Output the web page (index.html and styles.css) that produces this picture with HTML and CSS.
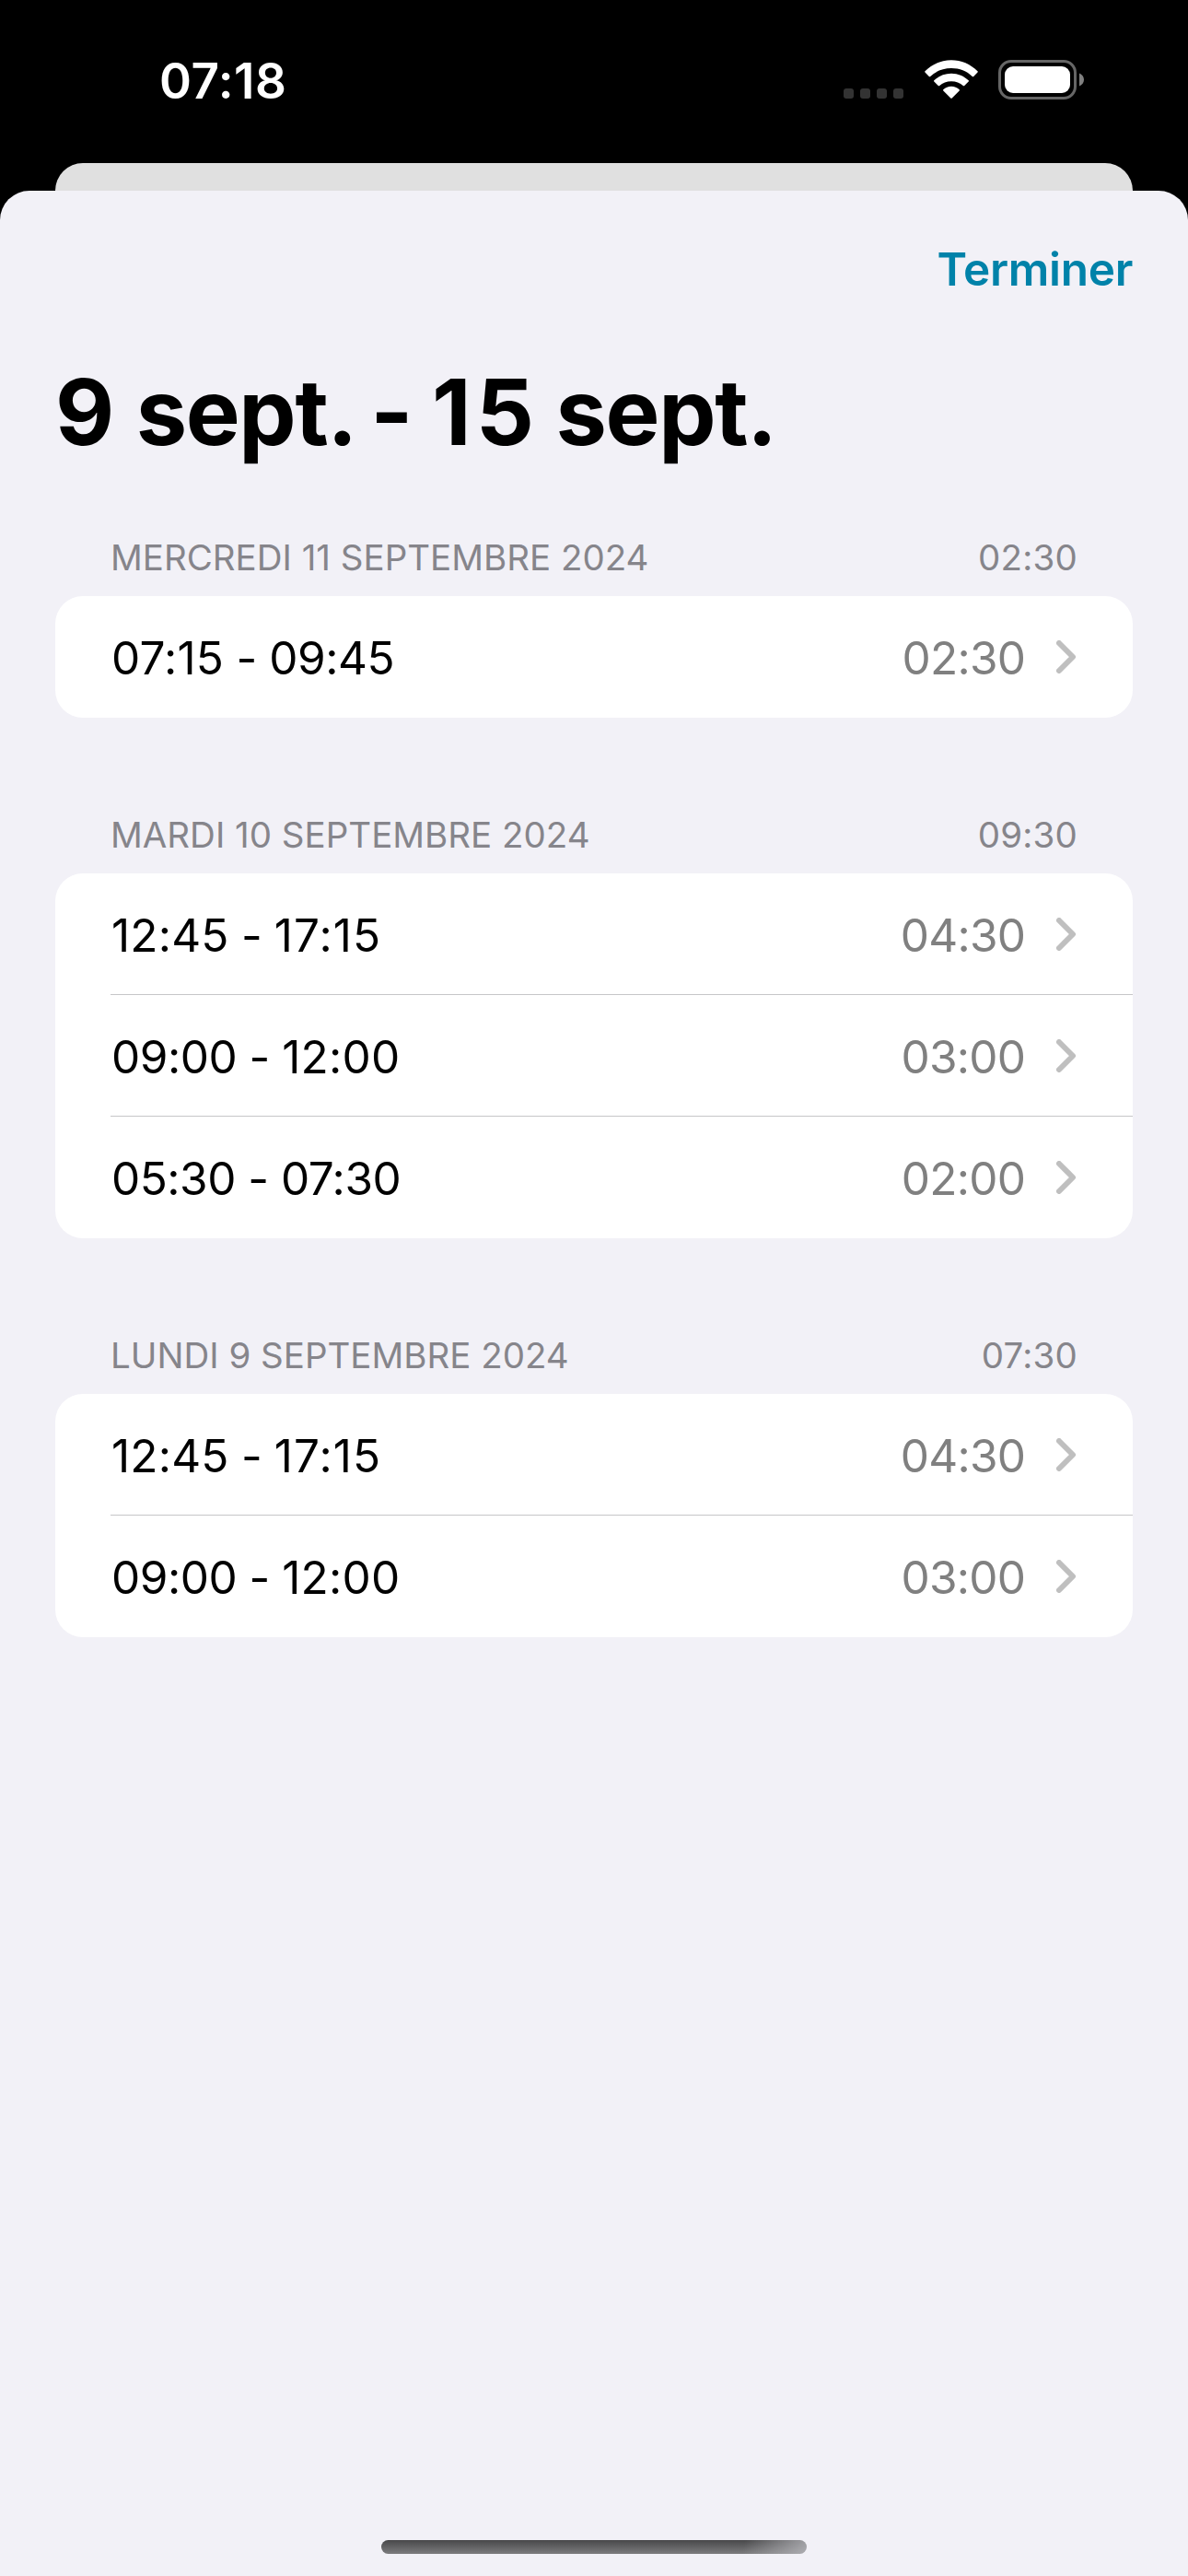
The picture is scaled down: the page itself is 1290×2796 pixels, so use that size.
FILE: index.html
```html
<!DOCTYPE html>
<html lang="fr">
<head>
<meta charset="utf-8">
<title>9 sept. - 15 sept.</title>
<link rel="stylesheet" href="styles.css">
</head>
<body>
<div class="screen">
  <header class="status-bar">
    <span class="clock">07:18</span>
    <div class="indicators">
      <svg class="cellular" width="65" height="11" viewBox="0 0 65 11" fill="#333"><rect width="11" height="11" rx="3"/><rect x="18" width="11" height="11" rx="3"/><rect x="36" width="11" height="11" rx="3"/><rect x="54" width="11" height="11" rx="3"/></svg>
      <svg class="wifi" width="58" height="43" viewBox="0 0 58 43" fill="#fff"><path d="M.5 12.200C8.200 4.500 18.200.2 29 .2s20.800 4.300 28.500 12q.6.7 0 1.400l-4.300 4.300q-.7.6-1.400 0C45.800 12.200 38 9 29 9S12.200 12.200 6.200 17.900q-.7.6-1.400 0L.5 13.600q-.6-.7 0-1.400z"/><path d="M10.300 22.300C15.200 17.500 21.800 14.700 29 14.700s13.800 2.800 18.700 7.600q.6.6 0 1.300l-4.500 4.400q-.7.6-1.400 0C38.400 25 34 23.300 29 23.300S19.600 25 16.200 28q-.7.6-1.400 0l-4.500-4.400q-.6-.7 0-1.300z"/><path d="M20.300 32.200c2.400-2.200 5.300-3.400 8.700-3.400s6.300 1.200 8.700 3.400q.6.6 0 1.300l-8 8q-.7.6-1.400 0l-8-8q-.6-.7 0-1.300z"/></svg>
      <svg class="battery" width="93" height="43" viewBox="0 0 93 43"><rect x="1.500" y="1.500" width="82" height="40" rx="12.500" fill="none" stroke="#666" stroke-width="3"/><rect x="7" y="7" width="71" height="29" rx="9" fill="#fff"/><path d="M88 14.500c3 1.300 5 3.800 5 7s-2 5.700-5 7z" fill="#808080"/></svg>
    </div>
  </header>
  <div class="previous-sheet"></div>
  <main class="sheet">
    <nav class="toolbar"><a class="done">Terminer</a></nav>
    <h1 class="title"><span>9 </span><span class="month">sept.</span><span class="dash"> - </span><span class="teen">15</span> <span class="month">sept.</span></h1>

    <section class="day">
      <div class="day-header"><h2 class="day-name">MERCREDI 11 SEPTEMBRE 2024</h2><span class="day-total">02:30</span></div>
      <ul class="card">
        <li class="entry"><span class="range"><span class="one">07:15</span><span class="dash"> - </span><span>09:45</span></span><span class="duration">02:30</span><svg class="chevron" width="22" height="36" viewBox="0 0 22 36"><path d="M3 3l15 15L3 33"/></svg></li>
      </ul>
    </section>

    <section class="day">
      <div class="day-header"><h2 class="day-name">MARDI 10 SEPTEMBRE 2024</h2><span class="day-total">09:30</span></div>
      <ul class="card">
        <li class="entry"><span class="range"><span class="one">12:45</span><span class="dash"> - </span><span class="ones">17:15</span></span><span class="duration">04:30</span><svg class="chevron" width="22" height="36" viewBox="0 0 22 36"><path d="M3 3l15 15L3 33"/></svg></li>
        <li class="entry"><span class="range"><span>09:00</span><span class="dash"> - </span><span class="one">12:00</span></span><span class="duration">03:00</span><svg class="chevron" width="22" height="36" viewBox="0 0 22 36"><path d="M3 3l15 15L3 33"/></svg></li>
        <li class="entry"><span class="range"><span>05:30</span><span class="dash"> - </span><span>07:30</span></span><span class="duration">02:00</span><svg class="chevron" width="22" height="36" viewBox="0 0 22 36"><path d="M3 3l15 15L3 33"/></svg></li>
      </ul>
    </section>

    <section class="day">
      <div class="day-header"><h2 class="day-name">LUNDI 9 SEPTEMBRE 2024</h2><span class="day-total">07:30</span></div>
      <ul class="card">
        <li class="entry"><span class="range"><span class="one">12:45</span><span class="dash"> - </span><span class="ones">17:15</span></span><span class="duration">04:30</span><svg class="chevron" width="22" height="36" viewBox="0 0 22 36"><path d="M3 3l15 15L3 33"/></svg></li>
        <li class="entry"><span class="range"><span>09:00</span><span class="dash"> - </span><span class="one">12:00</span></span><span class="duration">03:00</span><svg class="chevron" width="22" height="36" viewBox="0 0 22 36"><path d="M3 3l15 15L3 33"/></svg></li>
      </ul>
    </section>
    <div class="home-indicator"></div>
  </main>
</div>
</body>
</html>
```
FILE: styles.css
```css
* { box-sizing: border-box; margin: 0; padding: 0; }

body {
  background: #000;
  font-family: Inter, "Liberation Sans", sans-serif;
}

.screen {
  display: flex;
  flex-direction: column;
  width: 1290px;
  height: 2796px;
  overflow: hidden;
}

.status-bar {
  display: flex;
  justify-content: space-between;
  height: 177px;
  padding: 65px 113px 0 173px;
  color: #fff;
}

.clock {
  font-size: 53px;
  font-weight: 600;
  line-height: 46px;
  letter-spacing: .5px;
}

.indicators { display: flex; height: 43px; }
.cellular { margin: 31px 23px 0 0; }
.wifi { margin-right: 22px; }

/* Visible edge of the sheet underneath. */
.previous-sheet {
  flex: none;
  height: 30px;
  margin: 0 60px;
  border-radius: 30px 30px 0 0;
  background: #e0e0e0;
}

.sheet {
  display: flex;
  flex: 1;
  flex-direction: column;
  padding: 0 60px 24px;
  border-radius: 32px 32px 0 0;
  background: #f2f1f7;
}

.toolbar {
  display: flex;
  justify-content: flex-end;
  padding-top: 55px;
}

.done {
  color: #0082a9;
  font-size: 49.5px;
  font-weight: 600;
  line-height: 60px;
  letter-spacing: -.3px;
}

.title {
  margin-top: 65px;
  font-size: 99px;
  font-weight: 700;
  line-height: 120px;
  white-space: nowrap;
}

.month { letter-spacing: -1.4px; }

/* Keeps the hyphen at its lowercase height between digits. */
.dash {
  font-feature-settings: "calt" 0;
  white-space: pre;
}

.title .dash { margin: 0 -3px 0 -8px; }
.teen { margin-right: -5px; letter-spacing: 5px; }

.day { padding-top: 66px; }
.day + .day { padding-top: 95px; }

.day-header {
  display: flex;
  justify-content: space-between;
  height: 74px;
  padding: 9px 60px 0;
  color: #86858b;
  font-size: 38.5px;
  line-height: 46px;
}

.day-name { font-size: inherit; font-weight: 400; }
.day-total { letter-spacing: .2px; }

.card {
  border-radius: 30px;
  background: #fff;
  list-style: none;
}

.entry {
  display: flex;
  align-items: center;
  height: 132px;
  margin-left: 60px;
  padding-right: 61px;
  font-size: 49.5px;
  line-height: 60px;
}

.entry + .entry { box-shadow: 0 -1px #c6c6c8; }

.range {
  flex: 1;
  padding: 2px 0 0 1px;
  letter-spacing: -.5px;
}

.one { letter-spacing: .2px; }
.ones { letter-spacing: 1.1px; }

.duration {
  margin-right: 33.6px;
  padding-top: 2px;
  color: #808080;
  letter-spacing: -.7px;
}

.chevron {
  fill: none;
  stroke: #bfbfbf;
  stroke-width: 6;
  stroke-linecap: round;
  stroke-linejoin: round;
}

.home-indicator {
  width: 462px;
  height: 15px;
  margin: auto auto 0;
  border-radius: 8px;
  background:
    linear-gradient(100deg, transparent 85%, rgba(190, 190, 195, .75) 100%),
    linear-gradient(#48484a, #7c7c7e);
}
```
